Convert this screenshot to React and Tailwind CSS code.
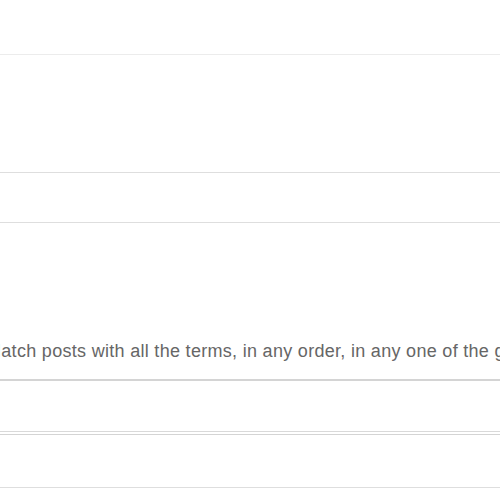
import React from 'react';

// search form, cropped: only the field edges and the hint line are visible
function Field({ className }) {
  return <div className={`w-full bg-white ${className}`} />;
}

export default function App() {
  return (
    <div className="w-[500px] h-[500px] overflow-hidden bg-white font-['Liberation_Sans',Arial,sans-serif]">
      <div className="h-[54px]" />
      <div className="h-[118px] border-t border-[#ececec]" />
      {/* keywords field */}
      <Field className="h-[51px] border-t border-b border-[#dedede]" />
      {/* hint */}
      <div className="h-[156px] flex items-end pb-[18px] overflow-hidden">
        <p className="ml-[-14px] whitespace-nowrap text-[18px] leading-[20px] tracking-[0.3px] text-[#666666]">
          Match posts with all the terms, in any order, in any one of the g
        </p>
      </div>
      <Field className="h-[53px] border-t-2 border-b border-t-[#d4d4d4] border-b-[#d9d9d9]" />
      <div className="h-[2px]" />
      <Field className="h-[54px] border-t border-b border-t-[#d4d4d4] border-b-[#dedede]" />
    </div>
  );
}
